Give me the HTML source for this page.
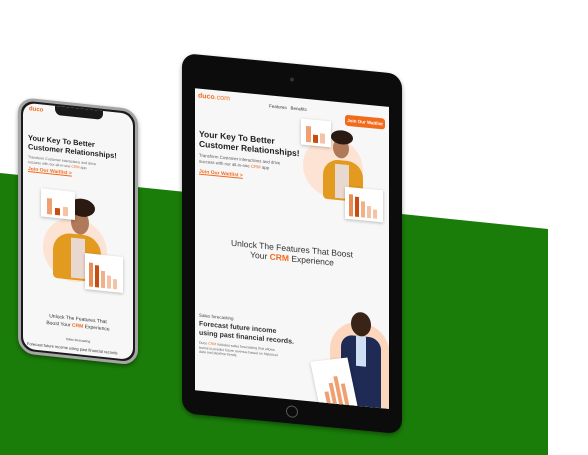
<!DOCTYPE html>
<html><head><meta charset="utf-8"><style>
*{margin:0;padding:0;box-sizing:border-box}
body{width:588px;height:455px;overflow:hidden;background:#fff;position:relative;font-family:"Liberation Sans",sans-serif}
.abs{position:absolute}
.card{position:absolute;background:#fff;box-shadow:0 1px 3px rgba(0,0,0,.25)}
.bar{position:absolute;bottom:3px;background:#f0a070}
.o{color:#f26b1d}
</style></head><body>
<svg class="abs" style="left:0;top:0" width="588" height="455"><polygon points="0,173 548,229 548,455 0,455" fill="#1a7d0a"/></svg>

<!-- Tablet -->
<div class="abs" style="left:182px;top:53px;width:220px;height:360px;transform:skewY(5.5deg);transform-origin:0 0;background:#0c0c0c;border-radius:14px;box-shadow:0 2px 4px rgba(0,0,0,.4)">
  <div class="abs" style="left:108px;top:14px;width:4px;height:4px;border-radius:50%;background:#333"></div>
  <div class="abs" style="left:104px;top:342px;width:12px;height:12px;border-radius:50%;border:1px solid #555"></div>
  <div class="abs" style="left:13px;top:34px;width:194px;height:302px;background:#f7f7f7;overflow:hidden">
    <div class="abs o" style="left:3px;top:4px;font-size:7px;font-weight:bold">duco<span style="font-weight:normal">.com</span></div>
    <div class="abs" style="left:74px;top:8px;font-size:4.5px;color:#333">Features&nbsp;&nbsp;&nbsp;Benefits</div>
    <div class="abs" style="left:150px;top:12px;width:40px;height:11px;background:#f26b1d;border-radius:3px;color:#fff;font-size:4.5px;font-weight:bold;text-align:center;line-height:11px">Join Our Waitlist</div>
    <div class="abs" style="left:4px;top:40px;font-size:8.5px;font-weight:bold;line-height:10px;color:#222;width:120px">Your Key To Better<br>Customer Relationships!</div>
    <div class="abs" style="left:4px;top:64px;font-size:4.3px;line-height:5.5px;color:#555;width:82px">Transform Customer interactions and drive success with our all-in-one <span class="o">CRM</span> app</div>
    <div class="abs o" style="left:4px;top:80px;font-size:5px;font-weight:bold;text-decoration:underline">Join Our Waitlist &gt;</div>
    <div class="abs" style="left:108px;top:36px;width:60px;height:60px;border-radius:50%;background:#fde3d3"></div>
    <div class="abs" style="left:128px;top:58px;width:40px;height:40px;border-radius:16px 16px 4px 4px;background:#e29a1f"></div>
    <div class="abs" style="left:140px;top:62px;width:14px;height:34px;background:#e9d8cf"></div>
    <div class="abs" style="left:138px;top:36px;width:16px;height:20px;border-radius:50%;background:#b07a5a"></div>
    <div class="abs" style="left:136px;top:28px;width:22px;height:14px;border-radius:50%;background:#2a1a12"></div>
    <div class="card" style="left:106px;top:20px;width:30px;height:26px"><div class="bar" style="left:5px;width:5px;height:16px"></div><div class="bar" style="left:12px;width:5px;height:8px;background:#c84d12"></div><div class="bar" style="left:19px;width:5px;height:10px;background:#f5c2a5"></div></div>
    <div class="card" style="left:150px;top:84px;width:38px;height:32px"><div class="bar" style="left:4px;width:4px;height:22px;background:#e98c55"></div><div class="bar" style="left:10px;width:4px;height:20px;background:#c84d12"></div><div class="bar" style="left:16px;width:4px;height:16px;background:#f0b08a"></div><div class="bar" style="left:22px;width:4px;height:12px;background:#f5c2a5"></div><div class="bar" style="left:28px;width:4px;height:9px;background:#f5c2a5"></div></div>
    <div class="abs" style="left:0;top:146px;width:194px;text-align:center;font-size:8.5px;line-height:10px;color:#333">Unlock The Features That Boost<br>Your <b class="o">CRM</b> Experience</div>
    <div class="abs" style="left:4px;top:224px;font-size:4.5px;color:#444">Sales forecasting</div>
    <div class="abs" style="left:4px;top:232px;font-size:7px;font-weight:bold;line-height:8.5px;color:#333;width:95px">Forecast future income using past financial records.</div>
    <div class="abs" style="left:4px;top:252px;font-size:3.5px;line-height:4.5px;color:#666;width:85px">Duco <span class="o">CRM</span> includes sales forecasting that allows teams to predict future revenue based on historical data and pipeline trends.</div>
    <div class="abs" style="left:135px;top:218px;width:60px;height:90px;border-radius:30px 30px 0 0;background:#fcd6bd"></div>
    <div class="abs" style="left:146px;top:232px;width:40px;height:76px;border-radius:12px 12px 0 0;background:#1f2a55"></div>
    <div class="abs" style="left:161px;top:232px;width:10px;height:30px;background:#cfe0f5"></div>
    <div class="abs" style="left:156px;top:208px;width:20px;height:24px;border-radius:50%;background:#3a2418"></div>
    <div class="card" style="left:120px;top:258px;width:38px;height:50px;transform:rotate(-12deg)"><div class="bar" style="left:8px;width:4px;height:16px"></div><div class="bar" style="left:14px;width:4px;height:24px"></div><div class="bar" style="left:20px;width:4px;height:30px"></div><div class="bar" style="left:26px;width:4px;height:22px"></div></div>
  </div>
</div>

<!-- Phone -->
<div class="abs" style="left:18px;top:97px;width:120px;height:256px;transform:skewY(6deg);transform-origin:0 0;background:#1a1a1a;border:3px solid #a5a5a5;border-radius:16px;box-shadow:0 2px 4px rgba(0,0,0,.4)">
  <div class="abs" style="left:2px;top:2px;width:110px;height:246px;background:#f7f7f7;border-radius:12px;overflow:hidden">
    <div class="abs" style="left:32px;top:0;width:48px;height:9px;background:#1a1a1a;border-radius:0 0 6px 6px"></div>
    <div class="abs o" style="left:6px;top:3px;font-size:6px;font-weight:bold">duco</div>
    <div class="abs" style="left:5px;top:30px;font-size:7.5px;font-weight:bold;line-height:9px;color:#222;width:105px">Your Key To Better<br>Customer Relationships!</div>
    <div class="abs" style="left:5px;top:52px;font-size:3.6px;line-height:4.6px;color:#666;width:70px">Transform Customer interactions and drive success with our all-in-one <span class="o">CRM</span> app</div>
    <div class="abs o" style="left:5px;top:63px;font-size:5px;font-weight:bold;text-decoration:underline">Join Our Waitlist &gt;</div>
    <div class="abs" style="left:20px;top:110px;width:64px;height:64px;border-radius:50%;background:#fde3d3"></div>
    <div class="abs" style="left:30px;top:126px;width:48px;height:46px;border-radius:18px 18px 4px 4px;background:#e29a1f"></div>
    <div class="abs" style="left:48px;top:130px;width:14px;height:40px;background:#e9d8cf"></div>
    <div class="abs" style="left:48px;top:102px;width:18px;height:24px;border-radius:50%;background:#b07a5a"></div>
    <div class="abs" style="left:46px;top:90px;width:26px;height:18px;border-radius:50%;background:#2a1a12"></div>
    <div class="card" style="left:18px;top:84px;width:34px;height:28px"><div class="bar" style="left:6px;width:5px;height:16px"></div><div class="bar" style="left:14px;width:5px;height:7px;background:#c84d12"></div><div class="bar" style="left:22px;width:5px;height:9px;background:#f5c2a5"></div></div>
    <div class="card" style="left:62px;top:144px;width:38px;height:36px"><div class="bar" style="left:4px;width:4px;height:24px;background:#e98c55"></div><div class="bar" style="left:10px;width:4px;height:22px;background:#c84d12"></div><div class="bar" style="left:16px;width:4px;height:17px;background:#f0b08a"></div><div class="bar" style="left:22px;width:4px;height:13px;background:#f5c2a5"></div><div class="bar" style="left:28px;width:4px;height:10px;background:#f5c2a5"></div></div>
    <div class="abs" style="left:0;top:208px;width:110px;text-align:center;font-size:5px;line-height:6.5px;color:#333">Unlock The Features That<br>Boost Your <b class="o">CRM</b> Experience</div>
    <div class="abs" style="left:0;top:230px;width:110px;text-align:center;font-size:3.2px;color:#444">Sales forecasting</div>
    <div class="abs" style="left:4px;top:238px;font-size:4px;color:#333;white-space:nowrap">Forecast future income using past financial records</div>
  </div>
</div>
</body></html>
